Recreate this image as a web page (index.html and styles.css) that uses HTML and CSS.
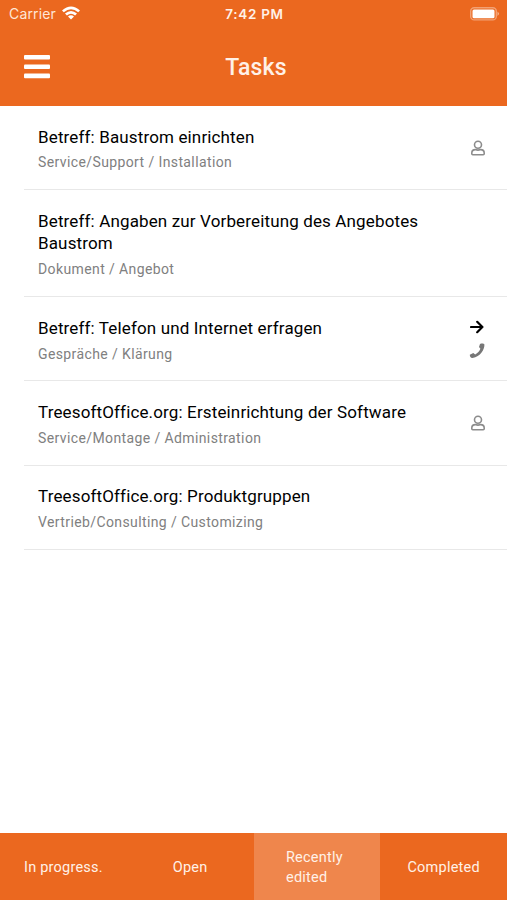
FILE: index.html
```html
<!DOCTYPE html>
<html lang="de"><head><meta charset="utf-8"><title>Tasks</title><link rel="stylesheet" href="styles.css"></head>
<body>
<header>
<div class="status"><div class="carrier"><span>Carrier</span><svg class="wifi" width="18" height="14" viewBox="0 0 18 14"><path d="M0 4.400Q9-3.400 18 4.400L16.200 6.300Q9 .2 1.800 6.300ZM3 7.500Q9 2.400 15 7.500L13.100 9.400Q9 6.100 4.900 9.400ZM6 10.500Q9 8.100 12 10.500L9 13.500Z" fill="#fff"/></svg></div><span class="time">7:42 PM</span><svg class="battery" width="30" height="14" viewBox="0 0 30 14"><rect x=".7" y=".7" width="25.600" height="12.200" rx="3.500" fill="none" stroke="#fff" stroke-width="1.400" stroke-opacity=".38"/><rect x="2.500" y="2.400" width="22" height="8.800" rx="1.500" fill="#fff"/><path d="M27.500 4.500Q30.500 6.800 27.500 9Z" fill="#fff" opacity=".5"/></svg></div>
<div class="bar"><svg class="menu" width="26" height="24" viewBox="0 0 26 24"><g fill="#fff"><rect width="26" height="4.600" rx="1"/><rect y="9.400" width="26" height="4.600" rx="1"/><rect y="18.600" width="26" height="4.600" rx="1"/></g></svg><h1>Tasks</h1></div>
</header>
<main>
<article><div class="copy"><h2>Betreff: Baustrom einrichten</h2><p>Service/Support / Installation</p></div><div class="icons"><svg width="14" height="16" viewBox="0 0 14 16"><g fill="none" stroke="#8c8c8c" stroke-width="1.600"><circle cx="7" cy="4.800" r="3.500"/><path d="M4.400 9.600C2 9.600.8 11 .8 13v.8q0 1 1 1h10.400q1 0 1-1V13c0-2-1.200-3.400-3.600-3.400Q7 10.600 4.400 9.600Z"/></g></svg></div></article>
<article><div class="copy"><h2>Betreff: Angaben zur Vorbereitung des Angebotes Baustrom</h2><p>Dokument / Angebot</p></div></article>
<article><div class="copy"><h2>Betreff: Telefon und Internet erfragen</h2><p>Gespräche / Klärung</p></div><div class="icons pair"><svg class="arrow" width="14" height="14" viewBox="0 0 14 14"><path d="M1 7h11.500M7.200 1.800 12.400 7l-5.200 5.200" fill="none" stroke="#000" stroke-width="2.200" stroke-linecap="round" stroke-linejoin="round"/></svg><svg width="16" height="16" viewBox="0 0 16 16"><path fill="#777" d="M11 .9C13 .2 14.900.5 15.400 1.500C15.800 6 11.500 14 3.500 15C1.800 15.200.8 13.300.8 11.700L4.300 9.900 6.200 11.500C8.700 10.200 10.500 8 11.400 5.800L10 4Z"/></svg></div></article>
<article><div class="copy"><h2>TreesoftOffice.org: Ersteinrichtung der Software</h2><p>Service/Montage / Administration</p></div><div class="icons"><svg width="14" height="16" viewBox="0 0 14 16"><g fill="none" stroke="#8c8c8c" stroke-width="1.600"><circle cx="7" cy="4.800" r="3.500"/><path d="M4.400 9.600C2 9.600.8 11 .8 13v.8q0 1 1 1h10.400q1 0 1-1V13c0-2-1.200-3.400-3.600-3.400Q7 10.600 4.400 9.600Z"/></g></svg></div></article>
<article><div class="copy"><h2>TreesoftOffice.org: Produktgruppen</h2><p>Vertrieb/Consulting / Customizing</p></div></article>
</main>
<nav><a>In progress.</a><a>Open</a><a class="active"><span>Recently<br>edited</span></a><a>Completed</a></nav>
</body></html>
```
FILE: styles.css
```css
*{box-sizing:border-box}
body{margin:0;height:900px;display:flex;flex-direction:column;background:#fff;font-family:Roboto,sans-serif;overflow:hidden}
header{height:106px;background:#eb681f;color:#fff;flex:none}
.status{height:28px;display:grid;grid-template-columns:1fr auto 1fr;align-items:center;padding:0 7px 0 9px;font-family:Inter,sans-serif;font-size:14px}
.carrier{display:flex;align-items:center;gap:6px;letter-spacing:.15px;color:#ffe6d6}
.carrier span{margin-top:-2px}
.carrier svg{margin-top:-2px}
.time{font-weight:600;font-size:13.500px;letter-spacing:.7px;color:#fff1e7}
.battery{justify-self:end;margin-top:-1px}
.bar{height:78px;display:grid;grid-template-columns:26px 1fr 26px;align-items:center;padding:0 19px 0 24px}
h1{margin:0;text-align:center;font-size:23px;font-weight:500;letter-spacing:.15px;color:#fff1e7}
main{flex:1;padding-left:24px}
article{display:flex;justify-content:space-between;padding:19.600px 22px 16.250px 14px;border-bottom:1px solid #e8e8e8}
.copy{width:400px}
h2{margin:0;font-size:17px;line-height:22.500px;font-weight:400;letter-spacing:.14px;color:#000}
p{margin:4.400px 0 .6px;font-size:14px;line-height:20px;letter-spacing:.39px;color:#808080}
.icons{display:flex;flex-direction:column;align-items:center;justify-content:center;gap:9px;padding-bottom:3px}
.pair{padding-bottom:1px}
nav{height:67px;display:grid;grid-template-columns:repeat(4,1fr);background:#eb681f;color:#fff1e7;font-size:14.500px;line-height:20px;letter-spacing:.22px}
nav a{display:flex;align-items:center;justify-content:center;padding-top:2px}
.active{background:#ef864c}
.active span{margin-right:5px}
```
